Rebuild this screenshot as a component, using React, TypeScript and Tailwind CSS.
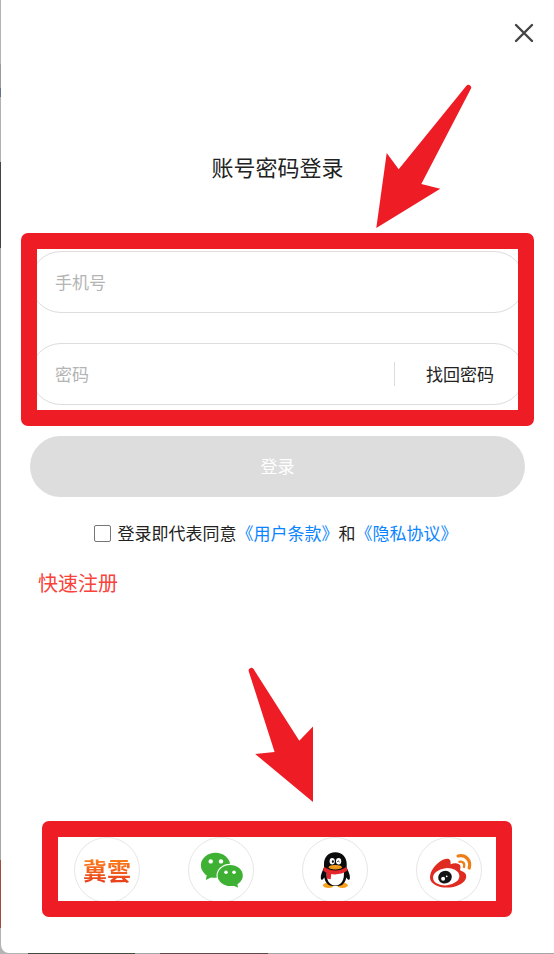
import { useState, type FormEvent, type ReactNode } from "react";

function CloseIcon() {
  return (
    <svg width="20" height="20" viewBox="0 0 20 20" aria-hidden="true">
      <path
        d="M2 2 L18 18 M18 2 L2 18"
        stroke="#444444"
        strokeWidth="2.4"
        strokeLinecap="round"
      />
    </svg>
  );
}

function JiyunLogo() {
  return (
    <span className="bg-linear-to-b from-[#ff8a1a] to-[#e5301c] bg-clip-text font-['Noto_Sans_CJK_TC',sans-serif] text-2xl font-bold text-transparent">
      冀雲
    </span>
  );
}

function WechatLogo() {
  return (
    <svg width="66" height="66" viewBox="0 0 66 66" className="shrink-0" aria-hidden="true">
      <g fill="#3eb134">
        <ellipse cx="27.5" cy="28.3" rx="14.6" ry="12.5" />
        <path d="M19 37 L17.8 43 L25 39.4 Z" />
      </g>
      <ellipse cx="42.2" cy="38.5" rx="13.7" ry="11.8" fill="#ffffff" />
      <g fill="#3eb134">
        <ellipse cx="42.2" cy="38.5" rx="12.6" ry="10.6" />
        <path d="M44 48.2 L50 50.6 L49 45 Z" />
      </g>
      <g fill="#ffffff">
        <circle cx="22.7" cy="24.4" r="2.2" />
        <circle cx="33" cy="24.4" r="2.2" />
        <circle cx="38" cy="35.2" r="1.8" />
        <circle cx="46" cy="35.2" r="1.8" />
      </g>
    </svg>
  );
}

function QqLogo() {
  return (
    <svg width="66" height="66" viewBox="0 0 66 66" className="shrink-0" aria-hidden="true">
      <g fill="#faa11b">
        <ellipse cx="26.4" cy="48.3" rx="5.4" ry="2.7" />
        <ellipse cx="40.4" cy="48.3" rx="5.4" ry="2.7" />
      </g>
      <path
        d="M33.3 15.3 C26 15.3 22 20.5 22 27 L22 30.5 C20.5 34 18.4 38 18.8 41 C19 43.8 20.5 43 22.4 40.4 C22.8 43.5 24 45.5 26 47.5 C28 49.6 38.6 49.6 40.6 47.5 C42.6 45.5 43.8 43.5 44.2 40.4 C46.1 43 47.7 43.8 47.9 41 C48.3 38 46.2 34 44.7 30.5 L44.7 27 C44.7 20.5 40.6 15.3 33.3 15.3 Z"
        fill="#0b0b0d"
      />
      <path
        d="M24.8 35 C24 42 26.5 48.4 33.3 48.6 C40 48.4 42.6 42 41.8 35 Z"
        fill="#ffffff"
      />
      <path
        d="M22 29.8 C28 34.6 38.6 34.6 44.6 29.8 L45.4 33.6 C41 37 34 38 29.2 37.1 L28.7 42.2 L24.7 41.4 L25 36 C23.6 35.4 22.4 34.6 21.2 33.5 Z"
        fill="#e5252a"
      />
      <ellipse cx="33.3" cy="30.2" rx="6.5" ry="2.3" fill="#faa11b" />
      <path d="M28 30.4 Q33.3 32.2 38.6 30.4" fill="none" stroke="#c87310" strokeWidth="0.5" />
      <ellipse cx="30.2" cy="24.3" rx="2.6" ry="3.3" fill="#ffffff" />
      <ellipse cx="36.6" cy="24.3" rx="2.6" ry="3.3" fill="#ffffff" />
      <ellipse cx="30.9" cy="24.6" rx="1" ry="1.4" fill="#0b0b0d" />
      <path d="M35.4 25 Q36.3 22.8 37.5 25" fill="none" stroke="#0b0b0d" strokeWidth="0.9" />
    </svg>
  );
}

function WeiboLogo() {
  return (
    <svg width="66" height="66" viewBox="0 0 66 66" className="shrink-0" aria-hidden="true">
      <path
        d="M14 40.5 C14.2 33 21 25.4 27.5 22.6 C32 20.7 35.4 22 34.5 27.2 C38 25.8 43.5 25.6 44.4 29 C44.8 30.8 43.6 32.6 44.4 33.6 C47.5 34.6 50.6 36.4 50.2 40.2 C49.4 46.6 39.5 50.6 31 50.6 C21.6 50.6 14 46.6 14 40.5 Z"
        fill="#e02b20"
      />
      <ellipse
        cx="30.2"
        cy="39.8"
        rx="13.2"
        ry="8.6"
        transform="rotate(-6 30.2 39.8)"
        fill="#ffffff"
      />
      <ellipse
        cx="29"
        cy="40.2"
        rx="6.9"
        ry="6.3"
        transform="rotate(-20 29 40.2)"
        fill="#141414"
      />
      <circle cx="27.1" cy="41.8" r="2" fill="#ffffff" />
      <circle cx="30.7" cy="39.3" r="0.9" fill="#ffffff" />
      <g fill="none" stroke="#ee7d18" strokeLinecap="round">
        <path d="M42 19 C50 17.4 55.4 23.6 53.2 31" strokeWidth="3.2" />
        <path d="M43.4 24.8 C47 24 49.2 26.8 48 30" strokeWidth="2.4" />
      </g>
    </svg>
  );
}

const providers: { id: string; label: string; logo: ReactNode }[] = [
  { id: "jiyun", label: "冀云登录", logo: <JiyunLogo /> },
  { id: "wechat", label: "微信登录", logo: <WechatLogo /> },
  { id: "qq", label: "QQ登录", logo: <QqLogo /> },
  { id: "weibo", label: "微博登录", logo: <WeiboLogo /> },
];

export default function App() {
  const [phone, setPhone] = useState("");
  const [password, setPassword] = useState("");
  const [agreed, setAgreed] = useState(false);

  function handleSubmit(e: FormEvent) {
    e.preventDefault();
  }

  return (
    <div className="flex min-h-screen flex-col bg-[linear-gradient(to_bottom,#b4b4b4_0_64px,#9a9a9a_64px_88px,#64708c_88px_97px,#b0b0b0_97px_162px,#444444_162px_248px,#a6a6a6_248px_860px,#9c4f3c_860px_928px,#b4b4b4_928px)] font-['Noto_Sans_CJK_SC',sans-serif] text-[17px] leading-6 text-[#222222]">
      <div className="flex flex-1 flex-col bg-[linear-gradient(to_right,transparent_0_28px,#4a4a3c_28px_135px,#a6a6a6_135px_160px,#5c4a48_160px_268px,#a6a6a6_268px)] bg-[length:100%_1px] bg-bottom bg-no-repeat pb-px pl-px">
        <main className="flex flex-1 flex-col rounded-bl-lg bg-white">
          <div className="flex justify-end pt-[23px] pr-5">
            <button type="button" aria-label="关闭" className="cursor-pointer">
              <CloseIcon />
            </button>
          </div>

          <h1 className="mt-[107px] text-center text-[22px] leading-8">
            账号密码登录
          </h1>

          <form onSubmit={handleSubmit} className="mt-[69px] pr-[29px] pl-[29px]">
            <div className="relative flex flex-col gap-[30px]">
              <input
                type="tel"
                aria-label="手机号"
                placeholder="手机号"
                value={phone}
                onChange={(e) => setPhone(e.target.value)}
                className="h-[62px] w-full rounded-full border border-[#dddddd] px-6 pb-0.5 outline-none placeholder:text-[#b4b4b4]"
              />
              <div className="flex h-[62px] items-center rounded-full border border-[#dddddd] pr-[30px] pl-6">
                <input
                  type="password"
                  aria-label="密码"
                  placeholder="密码"
                  value={password}
                  onChange={(e) => setPassword(e.target.value)}
                  className="min-w-0 flex-1 outline-none placeholder:text-[#b4b4b4]"
                />
                <a
                  href="#forgot"
                  className="border-l border-[#dddddd] pl-[31px]"
                >
                  找回密码
                </a>
              </div>

              {/* highlight around both fields */}
              <div className="pointer-events-none absolute -top-[18px] -right-[9px] -bottom-[21px] -left-[9px] rounded-[7px] border-16 border-[#ee1c25]" />
              <svg
                width="96"
                height="144"
                viewBox="0 0 96 144"
                className="pointer-events-none absolute right-[53px] bottom-full mb-[23px]"
                aria-hidden="true"
              >
                <path
                  d="M0.3 144 L10.7 69 L22.7 85.2 L90 2.2 Q92 0 94.2 1.4 Q96 2.6 95 4.6 L45.3 100 L64.3 104.7 Z"
                  fill="#ee1c25"
                />
              </svg>
            </div>

            <button
              type="submit"
              className="mt-[31px] h-[61px] w-full cursor-pointer rounded-full bg-[#dddddd] pb-0.5 text-white"
            >
              登录
            </button>

            <div className="mt-6 flex items-center justify-center pr-1">
              <input
                id="agree"
                type="checkbox"
                checked={agreed}
                onChange={(e) => setAgreed(e.target.checked)}
                className="mr-[7px] size-[17px] shrink-0 appearance-none rounded-xs border border-[#767676] bg-white checked:bg-[#0a84ff]"
              />
              <p>
                <label htmlFor="agree">登录即代表同意</label>
                <a href="#terms" className="text-[#0a84ff]">
                  《用户条款》
                </a>
                和
                <a href="#privacy" className="text-[#0a84ff]">
                  《隐私协议》
                </a>
              </p>
            </div>
          </form>

          <a
            href="#register"
            className="mt-6 ml-[37px] self-start text-xl leading-7 text-[#f8423a]"
          >
            快速注册
          </a>

          <div className="relative mr-12 mt-auto mb-[50px] ml-[49px] grid grid-cols-4 justify-items-center">
            {providers.map((provider) => (
              <button
                key={provider.id}
                type="button"
                aria-label={provider.label}
                className="flex size-[66px] cursor-pointer items-center justify-center rounded-full border border-[#e6e6e6]"
              >
                {provider.logo}
              </button>
            ))}

            {/* highlight around the third-party logins */}
            <div className="pointer-events-none absolute -top-4 -right-[6px] -bottom-[14px] -left-2 rounded-[7px] border-16 border-[#ee1c25]" />
            <svg
              width="66"
              height="136"
              viewBox="0 0 66 136"
              className="pointer-events-none absolute bottom-full left-[198px] mb-[34px]"
              aria-hidden="true"
            >
              <path
                d="M65 135 L65 59.5 L51.3 73.7 L5.6 2 Q4 0 2 1.2 Q0 2.4 0.8 4.6 L26.6 85 L7.2 87 Z"
                fill="#ee1c25"
              />
            </svg>
          </div>
        </main>
      </div>
    </div>
  );
}
